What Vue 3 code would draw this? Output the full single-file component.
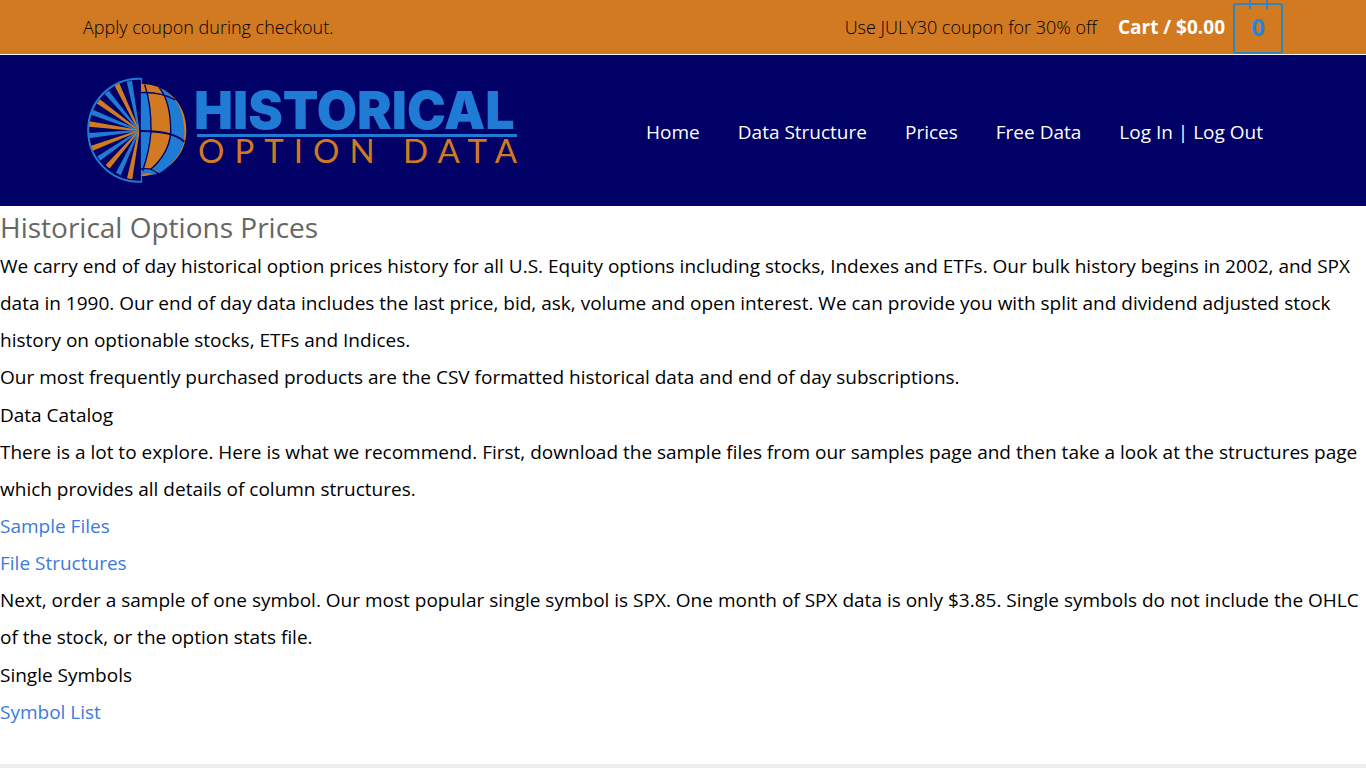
<template>
  <div class="page">
    <div class="topbar">
      <div class="container topbar__inner">
        <p class="topbar__note">Apply coupon during checkout.</p>
        <div class="topbar__right">
          <p class="topbar__note">Use JULY30 coupon for 30% off</p>
          <a class="cart" href="#cart">
            <span class="cart__total">Cart / $0.00</span>
            <span class="cart__bag">0</span>
          </a>
        </div>
      </div>
    </div>

    <header class="header">
      <div class="container header__inner">
        <a class="logo" href="#home" aria-label="Historical Option Data">
          <svg class="logo__mark" viewBox="0 0 336 348" aria-hidden="true">
            <path d="M184 20H176A151 154 0 0 0 176 329H184" fill="none" stroke="#1f7bd3" stroke-width="6" />
            <path d="M184 18V44M184 306V332" stroke="#1f7bd3" stroke-width="5" />
            <polygon v-for="ray in rays" :key="ray.points" :points="ray.points" :fill="ray.fill" />
            <path d="M183 36Q230 34 270 66Q318 106 319 176Q318 235 278 272Q240 309 183 313Z" fill="#d17a22" />
            <path d="M180 61L203 62Q214 110 213 178Q209 236 190 292L180 290Z" fill="#1f7bd3" />
            <path d="M237 48Q265 57 289 89Q311 120 313 178L312 208Q292 190 272 184Q275 105 248 64Z" fill="#1f7bd3" />
            <path d="M272 184Q295 190 312 208Q299 265 238 304Q230 293 213 290Q266 244 272 184Z" fill="#1f7bd3" />
            <path d="M184 292Q220 290 232 305Q208 312 184 309Z" fill="#1f7bd3" />
            <path d="M184 309Q192 301 219 306L190 313Z" fill="#d17a22" />
            <g fill="none" stroke="#000066" stroke-width="4">
              <path d="M194 38Q214 95 213 178Q209 236 188 296" />
              <path d="M237 46Q273 88 272 184Q266 245 212 292" />
              <path d="M180 62Q240 58 286 84" />
              <path d="M180 177Q278 176 313 209" stroke-width="6" />
              <path d="M180 291Q218 286 234 306" />
              <path d="M180 24V326" stroke-width="5" />
            </g>
          </svg>
          <svg class="logo__words" viewBox="0 0 344 116" aria-hidden="true">
            <text class="logo__name" x="2" y="57">HISTORICAL</text>
            <rect x="5" y="62" width="320" height="3" fill="#1f7bd3" />
            <text class="logo__tagline" x="6" y="91">OPTION DATA</text>
          </svg>
        </a>

        <nav class="nav">
          <a v-for="item in navItems" :key="item" class="nav__link" href="#">{{ item }}</a>
        </nav>
      </div>
    </header>

    <main class="content">
      <h1 class="content__title">Historical Options Prices</h1>
      <p>
        We carry end of day historical option prices history for all U.S. Equity options including stocks, Indexes and ETFs. Our bulk history begins in 2002, and SPX
        data in 1990. Our end of day data includes the last price, bid, ask, volume and open interest. We can provide you with split and dividend adjusted stock
        history on optionable stocks, ETFs and Indices.
      </p>
      <p>Our most frequently purchased products are the CSV formatted historical data and end of day subscriptions.</p>
      <h2>Data Catalog</h2>
      <p>
        There is a lot to explore. Here is what we recommend. First, download the sample files from our samples page and then take a look at the structures page
        which provides all details of column structures.
      </p>
      <p><a href="#samples">Sample Files</a></p>
      <p><a href="#structures">File Structures</a></p>
      <p>
        Next, order a sample of one symbol. Our most popular single symbol is SPX. One month of SPX data is only $3.85. Single symbols do not include the OHLC
        of the stock, or the option stats file.
      </p>
      <h2>Single Symbols</h2>
      <p><a href="#symbols">Symbol List</a></p>
    </main>

    <footer class="footer"></footer>
  </div>
</template>

<script setup>
const navItems = ['Home', 'Data Structure', 'Prices', 'Free Data', 'Log In | Log Out']

const hub = { x: 177, y: 176 }
const tips = [
  [148, 28], [111, 38], [80, 61], [55, 88], [36, 121], [28, 156],
  [26, 191], [36, 229], [56, 260], [83, 284], [115, 306], [149, 320]
]

// each ray widens from the hub to the rim, alternating blue and orange
const rays = tips.map(([x, y], index) => {
  const dx = x - hub.x
  const dy = y - hub.y
  const length = Math.hypot(dx, dy)
  const nx = -dy / length
  const ny = dx / length
  const corner = (px, py, half) => `${(px + nx * half).toFixed(1)},${(py + ny * half).toFixed(1)}`
  return {
    points: [
      corner(hub.x, hub.y, 2),
      corner(x, y, 8),
      corner(x, y, -8),
      corner(hub.x, hub.y, -2)
    ].join(' '),
    fill: index % 2 === 0 ? '#1f7bd3' : '#d17a22'
  }
})
</script>

<style>
body {
  margin: 0;
  background: #fff;
}
</style>

<style scoped>
.page {
  color: #000;
  font-family: 'Segoe UI', 'Open Sans', 'Noto Sans', sans-serif;
  font-size: 19px;
}

.container {
  box-sizing: border-box;
  max-width: 1240px;
  margin: 0 auto;
  padding: 0 20px;
}

.topbar {
  background: #d17a22;
  border-bottom: 1px solid #fff;
}

.topbar__inner {
  display: flex;
  align-items: center;
  justify-content: space-between;
  height: 54px;
}

.topbar__note {
  margin: 0;
  font-size: 18px;
  font-weight: 300;
}

.topbar__right {
  display: flex;
  align-items: center;
  gap: 21px;
}

.cart {
  display: flex;
  align-items: center;
  gap: 8px;
  color: #fff;
  font-weight: 700;
  text-decoration: none;
}

.cart__bag {
  position: relative;
  box-sizing: border-box;
  width: 50px;
  height: 51px;
  margin-top: 3px;
  border: 2px solid #2f86bd;
  border-radius: 3px;
  color: #2488d8;
  font-size: 24px;
  line-height: 44px;
  text-align: center;
}

/* bag handle */
.cart__bag::before {
  content: '';
  position: absolute;
  top: -6px;
  left: 14px;
  width: 15px;
  height: 10px;
  border: solid #2f86bd;
  border-width: 0 2px;
}

.header {
  background: #000066;
}

.header__inner {
  display: flex;
  align-items: center;
  justify-content: space-between;
  height: 151px;
}

.logo {
  display: flex;
  margin: 0 0 2px -3px;
}

.logo__mark {
  width: 112px;
  height: 116px;
}

.logo__words {
  width: 344px;
  height: 116px;
}

.logo__name {
  fill: #1f7bd3;
  font-family: Inter, sans-serif;
  font-size: 52px;
  font-weight: 900;
}

.logo__tagline {
  fill: #d17a22;
  font-family: Lato, sans-serif;
  font-size: 33px;
  font-weight: 400;
  letter-spacing: 10px;
}

.nav {
  display: flex;
  gap: 38px;
  padding: 2px 20px 0 0;
}

.nav__link {
  color: #fff;
  font-weight: 400;
  text-decoration: none;
  white-space: nowrap;
}

.content {
  padding-bottom: 33px;
  line-height: 37px;
}

.content__title {
  margin: 0;
  color: #666;
  font-size: 28px;
  font-weight: 400;
  line-height: 42px;
}

.content p {
  margin: 0;
}

.content h2 {
  margin: 0;
  font-size: 19px;
  font-weight: 400;
  line-height: 38px;
}

.content a {
  color: #3b7ade;
  text-decoration: none;
}

.footer {
  height: 4px;
  background: #eee;
}
</style>
